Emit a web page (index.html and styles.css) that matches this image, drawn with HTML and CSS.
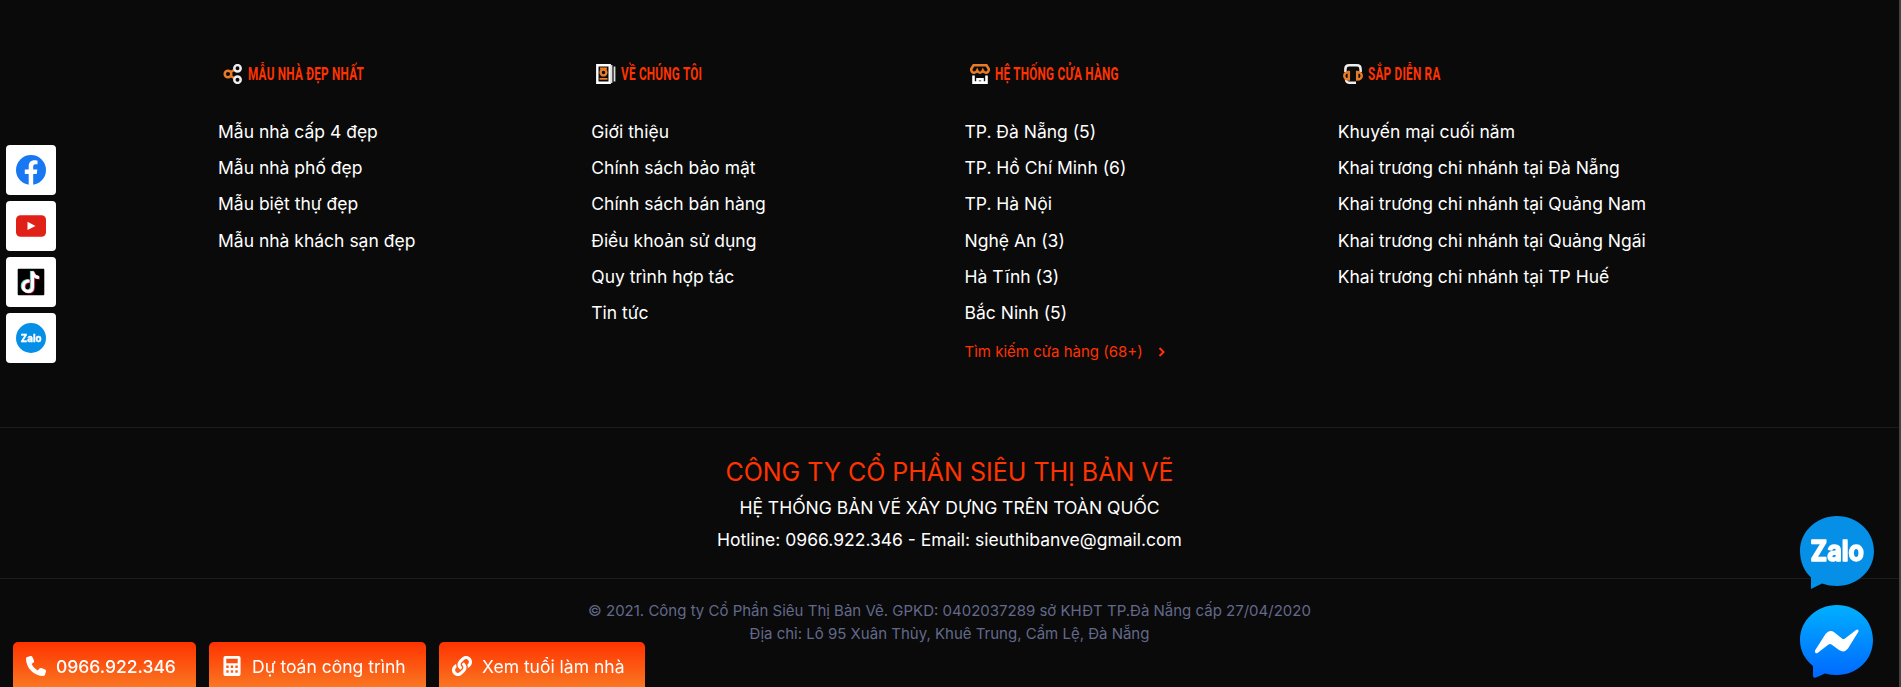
FILE: index.html
```html
<!DOCTYPE html>
<html lang="vi">
<head>
<meta charset="utf-8">
<title>Siêu Thị Bản Vẽ</title>
<link rel="stylesheet" href="styles.css">
</head>
<body>
<footer class="footer">
  <div class="columns">
    <section class="col">
      <h3 class="col-title"><svg class="ti t1" viewBox="0 0 20 20" fill="none"><path d="M7 8.500l4-2.500M7 11.500l4 2.500" stroke="#e87a28" stroke-width="2.400"/><circle cx="5" cy="10" r="3.300" stroke="#e87a28" stroke-width="2.500"/><circle cx="14.500" cy="4.300" r="3.200" stroke="#eee" stroke-width="2.500"/><circle cx="14.500" cy="15.700" r="3.200" stroke="#eee" stroke-width="2.500"/></svg><span>MẪU NHÀ ĐẸP NHẤT</span></h3>
      <ul><li>Mẫu nhà cấp 4 đẹp</li><li>Mẫu nhà phố đẹp</li><li>Mẫu biệt thự đẹp</li><li>Mẫu nhà khách sạn đẹp</li></ul>
    </section>
    <section class="col">
      <h3 class="col-title"><svg class="ti t2" viewBox="0 0 20 20" fill="none"><path d="M1.300 1.200h12.400v17.600H1.300z" stroke="#fff" stroke-width="2.400"/><path d="M15.500 1v18M18.500 2.500v15" stroke="#ddd" stroke-width="1.800"/><circle cx="7.500" cy="8.500" r="2.900" stroke="#e87a28" stroke-width="2.400"/><path d="M3.500 14.900h8M4 4.500h7" stroke="#e87a28" stroke-width="1.900"/></svg><span>VỀ CHÚNG TÔI</span></h3>
      <ul><li>Giới thiệu</li><li>Chính sách bảo mật</li><li>Chính sách bán hàng</li><li>Điều khoản sử dụng</li><li>Quy trình hợp tác</li><li>Tin tức</li></ul>
    </section>
    <section class="col">
      <h3 class="col-title"><svg class="ti t3" viewBox="0 0 20 20" fill="none"><path d="M3.500 1.300h13L18.800 5c.2 4.500-4.500 4.800-6 1.500-1.300 3-4.300 3-5.600 0-1.500 3.300-6.200 3-6-1.500z" stroke="#e87a28" stroke-width="2.500"/><path d="M3.500 11.500v7.100h13v-7.100M7.500 19v-3.700h5V19" stroke="#fff" stroke-width="2.600"/></svg><span>HỆ THỐNG CỬA HÀNG</span></h3>
      <ul><li>TP. Đà Nẵng (5)</li><li>TP. Hồ Chí Minh (6)</li><li>TP. Hà Nội</li><li>Nghệ An (3)</li><li>Hà Tĩnh (3)</li><li>Bắc Ninh (5)</li></ul>
      <a class="more"><span>Tìm kiếm cửa hàng (68+)</span><svg viewBox="0 0 8 12" fill="none"><path d="M1.500 2 5.500 6l-4 4" stroke="#ff3300" stroke-width="2"/></svg></a>
    </section>
    <section class="col">
      <h3 class="col-title"><svg class="ti t4" viewBox="0 0 20 20" fill="none"><path d="M2.400 8V5q0-3.700 3.700-3.700h7.800q3.700 0 3.700 3.700v3M3 15q0 3.800 4 3.800h6" stroke="#eee" stroke-width="2.500"/><path d="M5.800 8v7.500c-6 0-6-7.500 0-7.500zM14.200 8v7.500c6 0 6-7.500 0-7.500z" stroke="#e87a28" stroke-width="2.500"/></svg><span>SẮP DIỄN RA</span></h3>
      <ul><li>Khuyến mại cuối năm</li><li>Khai trương chi nhánh tại Đà Nẵng</li><li>Khai trương chi nhánh tại Quảng Nam</li><li>Khai trương chi nhánh tại Quảng Ngãi</li><li>Khai trương chi nhánh tại TP Huế</li></ul>
    </section>
  </div>
  <div class="company">
    <h2>CÔNG TY CỔ PHẦN SIÊU THỊ BẢN VẼ</h2>
    <p>HỆ THỐNG BẢN VẼ XÂY DỰNG TRÊN TOÀN QUỐC</p>
    <p>Hotline: 0966.922.346 - Email: sieuthibanve@gmail.com</p>
  </div>
  <div class="legal">
    <p>© 2021. Công ty Cổ Phần Siêu Thị Bản Vẽ. GPKD: 0402037289 sở KHĐT TP.Đà Nẵng cấp 27/04/2020</p>
    <p>Địa chỉ: Lô 95 Xuân Thủy, Khuê Trung, Cẩm Lệ, Đà Nẵng</p>
  </div>
</footer>

<nav class="social">
  <a><svg viewBox="0 0 30 30"><circle cx="15" cy="15" r="15" fill="#1877f2"/><path d="M12.700 30V19H8.800v-4.500h3.900v-3.300c0-4 2.400-6 5.800-6 1.500 0 3 .3 3 .3v3.700h-2c-1.900 0-2.300 1-2.300 2.300v3h4.200l-.7 4.500h-3.500v11z" fill="#fff"/></svg></a>
  <a><svg viewBox="0 0 30 30"><rect y="4.300" width="30" height="21.400" rx="4.500" fill="#df2117"/><path d="M11.500 10.700v8.400l8-4.200z" fill="#fff"/></svg></a>
  <a><svg viewBox="0 0 30 30"><rect x="1.700" y="1.700" width="26.600" height="26.600" rx="1" fill="#000"/><g fill="none" stroke-width="3.200"><path d="M13.500 14c-8-.5-8 10.500-1.500 10.500 3 0 4.500-2 4.500-4.500V4.500c.4 3.500 3 5.700 6.500 6" stroke="#6fd3d0" transform="translate(-1 -.5)"/><path d="M13.500 14c-8-.5-8 10.500-1.500 10.500 3 0 4.500-2 4.500-4.500V4.500c.4 3.500 3 5.700 6.500 6" stroke="#e8355c" transform="translate(.8 .5)"/><path d="M13.500 14c-8-.5-8 10.500-1.500 10.500 3 0 4.500-2 4.500-4.500V4.500c.4 3.500 3 5.700 6.500 6" stroke="#fff" stroke-width="3"/></g></svg></a>
  <a><svg viewBox="0 0 30 30"><circle cx="15" cy="15" r="15" fill="#068fe6"/><text class="zalo zalo-small" x="4.800" y="18.800" textLength="20.800" lengthAdjust="spacingAndGlyphs">Zalo</text></svg></a>
</nav>

<nav class="actions">
  <a class="a1"><svg viewBox="0 0 512 512" fill="#fff"><path d="M164.900 24.600c-7.700-18.600-28-28.500-47.400-23.200l-88 24C12.100 30.200 0 46 0 64c0 247.400 200.600 448 448 448 18 0 33.800-12.100 38.600-29.500l24-88c5.300-19.400-4.600-39.700-23.200-47.400l-96-40c-16.300-6.800-35.200-2.100-46.300 11.600L304.700 368C234.300 334.700 177.300 277.700 144 207.300l49.300-40.300c13.700-11.200 18.400-30 11.600-46.300z"/></svg><b>0966.922.346</b></a>
  <a class="a2"><svg viewBox="0 0 20 21"><path fill="#fff" fill-rule="evenodd" d="M3 0h14q2 0 2 2v17q0 2-2 2H3q-2 0-2-2V2q0-2 2-2zM4 3v4.500h12V3zM4 10v2.500h2.500V10zm4.700 0v2.500h2.500V10zm4.800 0v2.500H16V10zM4 15v2.500h2.500V15zm4.700 0v2.500h2.500V15zm4.800 0v2.500H16V15z"/></svg><span>Dự toán công trình</span></a>
  <a class="a3"><svg viewBox="0 0 512 512" fill="#fff"><path d="M326.612 185.391c59.747 59.809 58.927 155.698.36 214.590-.11.120-.240.250-.36.370l-67.200 67.200c-59.270 59.270-155.699 59.262-214.960 0-59.270-59.260-59.270-155.700 0-214.960l37.106-37.106c9.840-9.840 26.786-3.300 27.294 10.606.648 17.722 3.826 35.527 9.690 52.721 1.986 5.822.567 12.262-3.783 16.612l-13.087 13.087c-28.026 28.026-28.905 73.660-1.155 101.960 28.024 28.579 74.086 28.749 102.325.510l67.200-67.190c28.191-28.191 28.073-73.757 0-101.830-3.701-3.694-7.429-6.564-10.341-8.569a16.037 16.037 0 0 1-6.947-12.606c-.396-10.567 3.348-21.456 11.698-29.806l21.054-21.055c5.521-5.521 14.182-6.199 20.584-1.731a152.482 152.482 0 0 1 20.522 17.197zM467.547 44.449c-59.261-59.262-155.690-59.270-214.960 0l-67.200 67.200c-.120.120-.250.250-.360.370-58.566 58.892-59.387 154.781.360 214.590a152.454 152.454 0 0 0 20.521 17.196c6.402 4.468 15.064 3.789 20.584-1.731l21.054-21.055c8.350-8.350 12.094-19.239 11.698-29.806a16.037 16.037 0 0 0-6.947-12.606c-2.912-2.005-6.640-4.875-10.341-8.569-28.073-28.073-28.191-73.639 0-101.830l67.200-67.190c28.239-28.239 74.300-28.069 102.325.510 27.750 28.300 26.872 73.934-1.155 101.960l-13.087 13.087c-4.350 4.350-5.769 10.790-3.783 16.612 5.864 17.194 9.042 34.999 9.690 52.721.509 13.906 17.454 20.446 27.294 10.606l37.106-37.106c59.271-59.259 59.271-155.699.001-214.959z"/></svg><span>Xem tuổi làm nhà</span></a>
</nav>

<nav class="chat">
  <svg viewBox="0 0 74 73"><path d="M37 0c20.500 0 37 15.500 37 35S57.500 70 37 70q-8 0-15-2.500L11 73V61.500C4.500 55.500 0 46 0 35 0 15.500 16.500 0 37 0z" fill="#068fe6"/><text class="zalo" x="10.500" y="45" textLength="53.500" lengthAdjust="spacingAndGlyphs">Zalo</text></svg>
  <svg viewBox="0 0 74 73"><defs><linearGradient id="ms" x1="0" y1="0" x2="0" y2="1"><stop offset="0" stop-color="#00b0ff"/><stop offset="1" stop-color="#0068ff"/></linearGradient></defs><path d="M37 0c20.500 0 36 15.500 36 35S57.500 70 37 70q-6 0-12-1.500L16 72.500q-3 1-3-2V61C5 54.500 0 46 0 35 0 15.500 16.500 0 37 0z" fill="url(#ms)"/><path d="M15 45.500 25.500 29q4-5 9-1.500L42 33.500q1.500 1 3 0L56 25q3-1.500 2.500 1.500L48 43.500q-4 5-9 1.500L31.500 39.500q-1.500-1-3 0L17.500 48q-3 1-2.500-2.500z" fill="#fff"/></svg>
</nav>
<div class="edge"></div>
</body>
</html>
```

FILE: styles.css
```css
* { box-sizing: border-box; margin: 0; padding: 0; }
body { height: 687px; overflow: hidden; background: #0a0a0a; color: #fff; font-family: Inter, "Noto Sans", sans-serif; font-size: 17.500px; font-weight: 400; }
.footer { width: 1899px; }
.columns { display: grid; grid-template-columns: repeat(4, 1fr); width: 1493px; height: 427px; margin: 0 auto; padding-top: 60px; }
.col { padding-left: 15px; }
.col-title { display: flex; align-items: center; height: 28px; margin-bottom: 26px; padding-left: 5px; color: #ff3300; font: 700 18px/28px Roboto, sans-serif; white-space: nowrap; }
.col-title span { transform-origin: left; transform: scaleX(.65); margin-left: 5px; letter-spacing: .4px; }
.ti { width: 20px; height: 20px; flex: none; }
ul { list-style: none; }
li { height: 36.200px; line-height: 36.600px; white-space: nowrap; }
.more { display: flex; align-items: center; gap: 15px; height: 36px; margin-top: 2px; color: #ff3300; font-size: 15px; font-weight: 400; }
.more svg { width: 8px; height: 12px; margin-top: 2px; }
.company { height: 151px; border-top: 1px solid #1c1c1c; padding-top: 24px; text-align: center; }
.company h2 { font-size: 25px; font-weight: 400; line-height: 40px; color: #ff3300; }
.company p { line-height: 32px; }
.legal { border-top: 1px solid #1c1c1c; padding-top: 20px; text-align: center; font-size: 15px; font-weight: 400; line-height: 23px; color: #63698a; }
.social { position: fixed; left: 6px; top: 145px; display: grid; gap: 6px; }
.social a { display: grid; place-items: center; width: 50px; height: 50px; border-radius: 4px; background: #fff; }
.social svg { width: 30px; height: 30px; }
.zalo { font-family: Inter, sans-serif; font-size: 28px; font-weight: 700; fill: #fff; stroke: #fff; stroke-width: 1.6px; stroke-linejoin: round; }
.zalo-small { font-size: 10.500px; stroke-width: .4px; }
.actions { position: fixed; left: 13px; top: 642px; display: flex; gap: 13px; }
.actions a { display: flex; align-items: center; gap: 10px; height: 48px; padding-left: 13px; border-radius: 5px 5px 0 0; background: linear-gradient(#ff3300, #f97b24); white-space: nowrap; }
.actions b { font-weight: 500; }
.actions svg { width: 20px; height: 20px; flex: none; }
.a1 { width: 183px; }
.a2 { width: 217px; }
.a3 { width: 206px; }
.chat { position: fixed; left: 1800px; top: 516px; display: grid; gap: 16px; }
.chat svg { width: 74px; height: 73px; }
.edge { position: fixed; top: 0; right: 0; width: 2px; height: 687px; background: #424242; }
```
